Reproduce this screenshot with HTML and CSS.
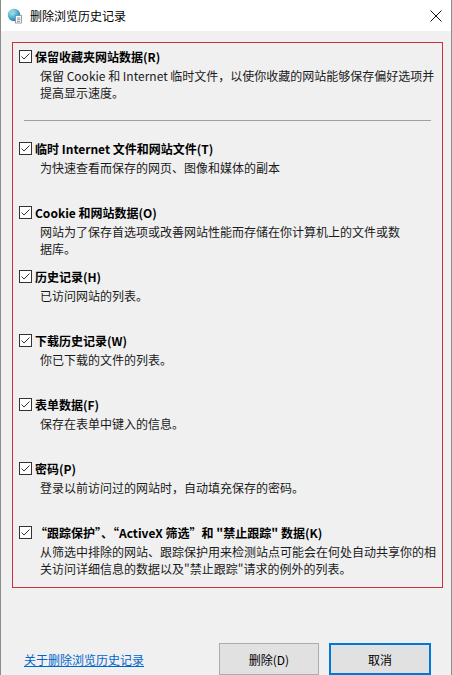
FILE: index.html
```html
<html lang="zh-CN">

<head>
    <meta charset="UTF-8">
    <meta name="viewport" content="width=device-width, initial-scale=1.0">
    <title>删除浏览历史记录</title>
    <link rel="stylesheet" href="styles.css">
</head>

<body>
    <div class="window">
        <div class="titlebar">
            <svg class="app-icon" width="16" height="16" viewBox="0 0 16 16">
                <defs>
                    <radialGradient id="globe" cx="0.35" cy="0.3" r="0.8">
                        <stop offset="0" stop-color="#bfe9f5" />
                        <stop offset="0.5" stop-color="#4fb3d6" />
                        <stop offset="1" stop-color="#1f6f9a" />
                    </radialGradient>
                </defs>
                <circle cx="7" cy="7" r="6.2" fill="url(#globe)" />
                <path d="M3 4 Q5 2.5 7 3.5 Q6 5.5 4 6 Z M8 8 Q10 7 11.5 8.5 Q10 11 8.5 11 Z" fill="#8fd0a8" opacity="0.8" />
                <rect x="8.5" y="7.5" width="6" height="7.5" fill="#ffffff" stroke="#7d8a96" stroke-width="0.8" />
                <path d="M10 10 H13.5 M10 11.7 H13.5 M10 13.4 H13" stroke="#6d7f90" stroke-width="0.8" />
            </svg>
            <span class="title">删除浏览历史记录</span>
            <svg class="close" width="12" height="12" viewBox="0 0 12 12">
                <path d="M0.5 0.5 L11.5 11.5 M11.5 0.5 L0.5 11.5" stroke="#111" stroke-width="1" />
            </svg>
        </div>

        <div class="content">
            <div class="options">
                <div class="option first">
                    <label class="option-title">
                        <svg class="check" width="13" height="13" viewBox="0 0 13 13">
                            <rect x="0.5" y="0.5" width="12" height="12" fill="#fff" stroke="#333" />
                            <path d="M2.5 6.5 L5 9 L10.5 3.5" fill="none" stroke="#333" stroke-width="1" />
                        </svg>
                        保留收藏夹网站数据(R)
                    </label>
                    <p class="option-desc">保留 Cookie 和 Internet 临时文件，以使你收藏的网站能够保存偏好选项并<br>提高显示速度。</p>
                </div>

                <hr class="divider">

                <div class="option">
                    <label class="option-title">
                        <svg class="check" width="13" height="13" viewBox="0 0 13 13">
                            <rect x="0.5" y="0.5" width="12" height="12" fill="#fff" stroke="#333" />
                            <path d="M2.5 6.5 L5 9 L10.5 3.5" fill="none" stroke="#333" stroke-width="1" />
                        </svg>
                        临时 Internet 文件和网站文件(T)
                    </label>
                    <p class="option-desc">为快速查看而保存的网页、图像和媒体的副本</p>
                </div>

                <div class="option">
                    <label class="option-title">
                        <svg class="check" width="13" height="13" viewBox="0 0 13 13">
                            <rect x="0.5" y="0.5" width="12" height="12" fill="#fff" stroke="#333" />
                            <path d="M2.5 6.5 L5 9 L10.5 3.5" fill="none" stroke="#333" stroke-width="1" />
                        </svg>
                        Cookie 和网站数据(O)
                    </label>
                    <p class="option-desc">网站为了保存首选项或改善网站性能而存储在你计算机上的文件或数<br>据库。</p>
                </div>

                <div class="option">
                    <label class="option-title">
                        <svg class="check" width="13" height="13" viewBox="0 0 13 13">
                            <rect x="0.5" y="0.5" width="12" height="12" fill="#fff" stroke="#333" />
                            <path d="M2.5 6.5 L5 9 L10.5 3.5" fill="none" stroke="#333" stroke-width="1" />
                        </svg>
                        历史记录(H)
                    </label>
                    <p class="option-desc">已访问网站的列表。</p>
                </div>

                <div class="option">
                    <label class="option-title">
                        <svg class="check" width="13" height="13" viewBox="0 0 13 13">
                            <rect x="0.5" y="0.5" width="12" height="12" fill="#fff" stroke="#333" />
                            <path d="M2.5 6.5 L5 9 L10.5 3.5" fill="none" stroke="#333" stroke-width="1" />
                        </svg>
                        下载历史记录(W)
                    </label>
                    <p class="option-desc">你已下载的文件的列表。</p>
                </div>

                <div class="option">
                    <label class="option-title">
                        <svg class="check" width="13" height="13" viewBox="0 0 13 13">
                            <rect x="0.5" y="0.5" width="12" height="12" fill="#fff" stroke="#333" />
                            <path d="M2.5 6.5 L5 9 L10.5 3.5" fill="none" stroke="#333" stroke-width="1" />
                        </svg>
                        表单数据(F)
                    </label>
                    <p class="option-desc">保存在表单中键入的信息。</p>
                </div>

                <div class="option">
                    <label class="option-title">
                        <svg class="check" width="13" height="13" viewBox="0 0 13 13">
                            <rect x="0.5" y="0.5" width="12" height="12" fill="#fff" stroke="#333" />
                            <path d="M2.5 6.5 L5 9 L10.5 3.5" fill="none" stroke="#333" stroke-width="1" />
                        </svg>
                        密码(P)
                    </label>
                    <p class="option-desc">登录以前访问过的网站时，自动填充保存的密码。</p>
                </div>

                <div class="option last">
                    <label class="option-title">
                        <svg class="check" width="13" height="13" viewBox="0 0 13 13">
                            <rect x="0.5" y="0.5" width="12" height="12" fill="#fff" stroke="#333" />
                            <path d="M2.5 6.5 L5 9 L10.5 3.5" fill="none" stroke="#333" stroke-width="1" />
                        </svg>
                        “跟踪保护”、“ActiveX 筛选”和 "禁止跟踪" 数据(K)
                    </label>
                    <p class="option-desc">从筛选中排除的网站、跟踪保护用来检测站点可能会在何处自动共享你的相<br>关访问详细信息的数据以及"禁止跟踪"请求的例外的列表。</p>
                </div>
            </div>

            <div class="footer">
                <a href="#" class="help-link">关于删除浏览历史记录</a>
                <div class="buttons">
                    <button class="btn">删除(D)</button>
                    <button class="btn default">取消</button>
                </div>
            </div>
        </div>
    </div>
</body>

</html>
```

FILE: styles.css
```css
body {
    margin: 0;
    padding: 0;
    background-color: #f0f0f0;
    font-family: "Noto Sans CJK SC", "Noto Sans", sans-serif;
    font-size: 12px;
    color: #000;
    overflow: hidden;
}

.window {
    width: 452px;
    height: 675px;
    box-sizing: border-box;
    border-left: 1px solid #8c8c8c;
    border-right: 1px solid #8c8c8c;
    background-color: #f0f0f0;
    overflow: hidden;
}

.titlebar {
    height: 31px;
    background-color: #fff;
    display: flex;
    align-items: center;
    padding: 0 9px 0 6px;
}

.app-icon {
    margin-right: 7px;
}

.title {
    flex: 1;
    font-size: 12px;
    line-height: 17px;
}

.close {
    width: 12px;
    height: 12px;
}

.content {
    padding: 11px 8px 0 11px;
}

.options {
    border: 1px solid #c8323c;
    padding: 5px 0 10px 6px;
}

.option {
    height: 64px;
}

.option.first,
.option.last {
    height: auto;
}

.option-title {
    display: flex;
    align-items: center;
    font-weight: bold;
    line-height: 17px;
    white-space: nowrap;
}

.check {
    margin-right: 3px;
    flex-shrink: 0;
}

.option-desc {
    margin: 2px 0 0 21px;
    line-height: 17px;
    color: #1a1a1a;
    white-space: nowrap;
}

.divider {
    border: none;
    border-top: 1px solid #a0a0a0;
    margin: 19px 11px 19px 5px;
    height: 0;
}

.footer {
    display: flex;
    align-items: center;
    justify-content: space-between;
    margin-top: 55px;
    padding: 0 12px 0 12px;
}

.help-link {
    color: #0066cc;
    text-decoration: underline;
    line-height: 17px;
}

.buttons {
    display: flex;
    gap: 10px;
}

.btn {
    font-family: "Noto Sans CJK SC", "Noto Sans", sans-serif;
    font-size: 12px;
    color: #000;
    background-color: #e1e1e1;
    border: 1px solid #adadad;
    width: 100px;
    height: 32px;
    padding: 0;
}

.btn.default {
    width: 102px;
    border: 2px solid #0078d7;
}
```
